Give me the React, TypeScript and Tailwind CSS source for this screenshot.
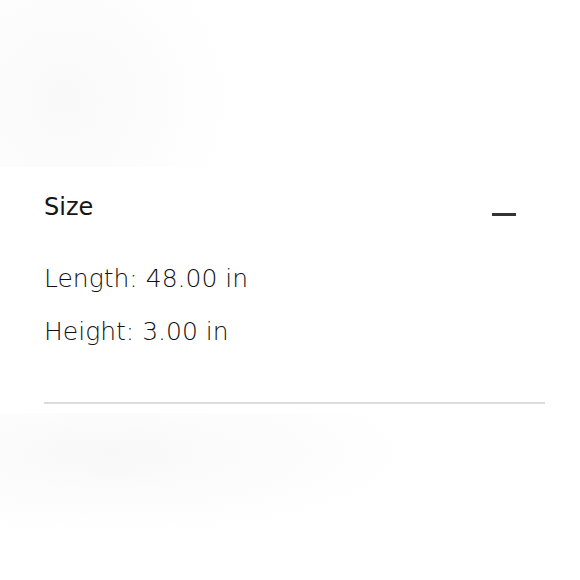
export default function App() {
  return (
    <div className="w-[580px] h-[580px] bg-white flex flex-col overflow-hidden" style={{ fontFamily: '"DejaVu Sans", "Open Sans", sans-serif' }}>
      {/* faint blurred backdrop above */}
      <div className="h-[167px] bg-[radial-gradient(circle_at_65px_100px,#f9f9f9_0px,#fbfbfb_60px,#fdfdfd_110px,#ffffff_170px),radial-gradient(circle_at_495px_110px,#fcfcfc_0px,#fdfdfd_60px,#ffffff_80px)]" />

      {/* Size accordion */}
      <section className="bg-white pl-[44px] pr-[35px]">
        <div className="flex items-center justify-between pt-[24px]">
          <h3 className="text-[24px] leading-[32px] font-normal text-[#161616]">Size</h3>
          <span className="block w-[24px] h-[3px] bg-[#333333] mr-[29px] mt-[14px]" />
        </div>
        <div className="pt-[39px] pb-[53px] flex flex-col gap-[19px] text-[25px] leading-[34px] font-extralight text-[#111111]">
          <p>Length: 48.00 in</p>
          <p>Height: 3.00 in</p>
        </div>
        <div className="border-b-2 border-[#dcdcdc]" />
      </section>

      {/* faint blurred backdrop below */}
      <div className="flex-1 mt-[9px] bg-[radial-gradient(ellipse_at_110px_40px,#f8f8f8_0px,#fafafa_80px,#fcfcfc_150px,#fdfdfd_220px,#ffffff_300px)]" />
    </div>
  )
}
